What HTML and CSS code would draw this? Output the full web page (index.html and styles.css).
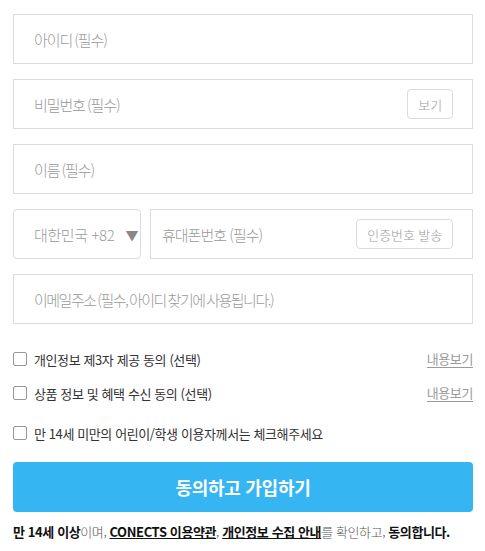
FILE: index.html
```html
<!DOCTYPE html>
<html lang="ko">
<head>
    <meta charset="UTF-8">
    <meta name="viewport" content="width=device-width, initial-scale=1.0">
    <title>회원가입</title>
    <link rel="stylesheet" href="styles.css">
</head>
<body>
    <form class="signup">
        <div class="field">
            <input type="text" placeholder="아이디 (필수)">
        </div>
        <div class="field">
            <input type="password" placeholder="비밀번호 (필수)">
            <button type="button" class="inline-btn">보기</button>
        </div>
        <div class="field">
            <input type="text" placeholder="이름 (필수)">
        </div>
        <div class="phone-row">
            <div class="country">
                <span>대한민국 +82</span>
                <span class="caret">▼</span>
            </div>
            <div class="field phone">
                <input type="tel" placeholder="휴대폰번호 (필수)">
                <button type="button" class="inline-btn">인증번호 발송</button>
            </div>
        </div>
        <div class="field">
            <input type="email" class="email" placeholder="이메일주소 (필수, 아이디 찾기에 사용됩니다.)">
        </div>

        <div class="agree-list">
            <label class="agree">
                <span class="box"></span>
                <span class="agree-text">개인정보 제3자 제공 동의 (선택)</span>
                <a class="more">내용보기</a>
            </label>
            <label class="agree">
                <span class="box"></span>
                <span class="agree-text">상품 정보 및 혜택 수신 동의 (선택)</span>
                <a class="more">내용보기</a>
            </label>
            <label class="agree child">
                <span class="box"></span>
                <span class="agree-text">만 14세 미만의 어린이/학생 이용자께서는 체크해주세요</span>
            </label>
        </div>

        <button type="button" class="submit">동의하고 가입하기</button>

        <p class="notice">
            <b>만 14세 이상</b>이며, <b class="link">CONECTS 이용약관</b>, <b class="link">개인정보 수집 안내</b>를 확인하고, <b>동의합니다.</b>
        </p>
    </form>
</body>
</html>
```

FILE: styles.css
```css
:root {
    --border: #dcdcdc;
    --placeholder: #9a9a9a;
    --text: #333;
    --primary: #35b6f2;
}

body {
    margin: 0;
    padding: 14px 12px 0 13px;
    font-family: "Noto Sans CJK KR", "Noto Sans", sans-serif;
    color: var(--text);
    background: #fff;
}

.signup {
    display: flex;
    flex-direction: column;
}

.field {
    display: flex;
    align-items: center;
    height: 50px;
    box-sizing: border-box;
    border: 1px solid var(--border);
    margin-bottom: 15px;
    padding: 0 19px 0 20px;
}

.field input {
    flex: 1;
    min-width: 0;
    border: none;
    outline: none;
    padding: 0;
    font-family: inherit;
    font-size: 15px;
    font-weight: 300;
    letter-spacing: -1.1px;
    word-spacing: -1px;
    color: var(--text);
    background: transparent;
}

.field input.email {
    letter-spacing: -1.5px;
}

.field input::placeholder {
    color: var(--placeholder);
}

.inline-btn {
    height: 30px;
    padding: 0 10px;
    border: 1px solid var(--border);
    border-radius: 4px;
    background: #fff;
    color: var(--placeholder);
    font-family: inherit;
    font-size: 13px;
    font-weight: 300;
    letter-spacing: -0.1px;
}

.phone-row {
    display: flex;
    gap: 9px;
    margin-bottom: 15px;
}

.country {
    width: 128px;
    height: 50px;
    box-sizing: border-box;
    border: 1px solid var(--border);
    border-radius: 4px;
    display: flex;
    align-items: center;
    justify-content: space-between;
    padding: 0 2px 0 20px;
    color: var(--placeholder);
    font-size: 15px;
    font-weight: 300;
    letter-spacing: -0.4px;
}

.caret {
    font-size: 13px;
    color: #888;
}

.field.phone {
    flex: 1;
    margin-bottom: 0;
    padding-left: 11px;
}

.field.phone input {
    letter-spacing: -1px;
    word-spacing: 0;
}

.agree-list {
    display: flex;
    flex-direction: column;
    padding-top: 3px;
}

.agree {
    display: flex;
    align-items: center;
    height: 34px;
    font-size: 13px;
    letter-spacing: -0.4px;
    color: var(--text);
}

.agree.child {
    margin-top: 6px;
}

.box {
    width: 12px;
    height: 12px;
    border: 1px solid #999;
    border-radius: 2px;
    margin-right: 7px;
}

.agree-text {
    flex: 1;
}

.more {
    color: var(--placeholder);
    border-bottom: 1px solid #999;
    line-height: 17px;
}

.submit {
    margin-top: 12px;
    height: 50px;
    border: none;
    border-radius: 4px;
    background: var(--primary);
    color: #fff;
    font-family: inherit;
    font-size: 18px;
    font-weight: 700;
    letter-spacing: -0.3px;
}

.notice {
    margin: 10px 0 0;
    font-size: 13px;
    font-weight: 300;
    color: #555;
    letter-spacing: -0.4px;
}

.notice b {
    color: #111;
    font-weight: 700;
}

.notice .link {
    text-decoration: underline;
}
```
